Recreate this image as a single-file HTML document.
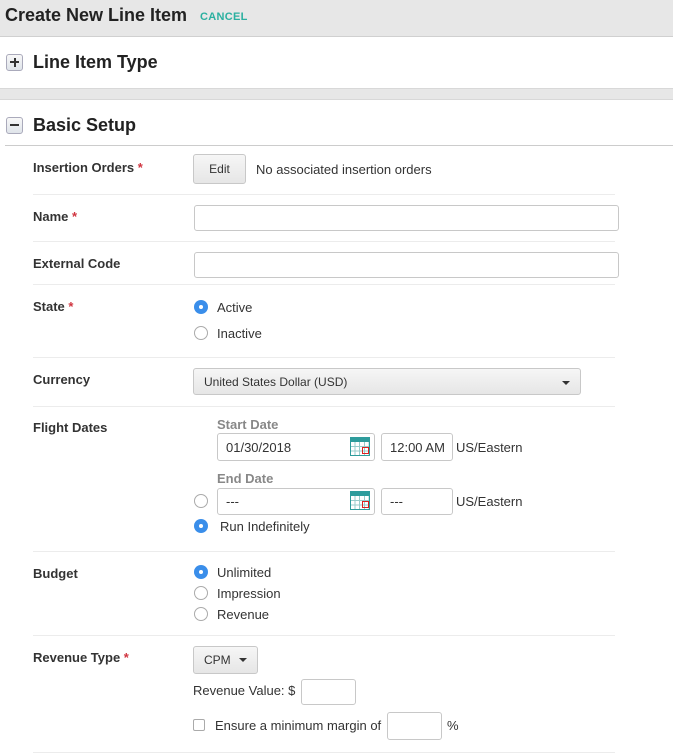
<!DOCTYPE html>
<html><head><style>
*{box-sizing:border-box;margin:0;padding:0}
body{width:673px;height:755px;position:relative;background:#fff;font-family:"Liberation Sans",Arial,sans-serif;color:#333;overflow:hidden;font-size:13px}
.a{position:absolute}
.lbl{position:absolute;left:33px;font-weight:bold;font-size:13px;color:#333}
.req{color:#d0343f}
.sep{position:absolute;left:33px;width:582px;height:1px;background:#ececec}
.inp{position:absolute;border:1px solid #c8c8c8;border-radius:3px;background:#fff;font-size:13px;padding-left:8px;display:flex;align-items:center}
.btn{position:absolute;border:1px solid #c8c8c8;border-radius:3px;background:linear-gradient(#f6f6f6,#e6e6e6);font-size:12px;display:flex;align-items:center}
.r{position:absolute;width:14px;height:14px;border-radius:50%;border:1px solid #aaa;background:#fff}
.r.on{border:none;background:#3a8eea}
.r.on::after{content:"";position:absolute;left:5px;top:5px;width:4px;height:4px;border-radius:50%;background:#fff}
.t{position:absolute;font-size:13px;color:#333}
.car{display:inline-block;width:0;height:0;border-left:4px solid transparent;border-right:4px solid transparent;border-top:4px solid #333}
.cal{position:absolute;width:20px;height:19px;border:1px solid #2e9c9c;background:
linear-gradient(#2e9c9c,#2e9c9c) 0 0/100% 4px no-repeat,
repeating-linear-gradient(90deg,transparent 0 3.6px,#9cc 3.6px 4.6px),
repeating-linear-gradient(0deg,transparent 0 3.6px,#9cc 3.6px 4.6px)}
.cal::after{content:"";position:absolute;left:11px;top:9px;width:5px;height:5px;border:1px solid #d22}
.box{position:absolute;width:17px;height:17px;border:1px solid #aab;border-radius:3px;background:linear-gradient(#f8f8f8,#dfe4ea)}
.box .h{position:absolute;left:3px;top:6px;width:9px;height:2px;background:#333}
.box .v{position:absolute;left:6.5px;top:2.5px;width:2px;height:9px;background:#333}
</style></head><body>
<div class="a" style="left:0;top:0;width:673px;height:37px;background:#e7e7e7;border-bottom:1px solid #d0d0d0"></div>
<div class="a" style="left:5px;top:5px;font-size:18px;font-weight:bold;color:#222">Create New Line Item</div>
<div class="a" style="left:200px;top:11px;font-size:11px;font-weight:bold;color:#2bb0a0;letter-spacing:.3px">CANCEL</div>

<div class="box" style="left:6px;top:54px"><div class="h"></div><div class="v"></div></div>
<div class="a" style="left:33px;top:52px;font-size:18px;font-weight:bold;color:#222">Line Item Type</div>
<div class="a" style="left:0;top:88px;width:673px;height:12px;background:#e7e7e7;border-top:1px solid #d8d8d8;border-bottom:1px solid #d8d8d8"></div>
<div class="box" style="left:6px;top:117px"><div class="h"></div></div>
<div class="a" style="left:33px;top:115px;font-size:18px;font-weight:bold;color:#222">Basic Setup</div>
<div class="a" style="left:5px;top:145px;width:668px;height:1px;background:#ccc"></div>

<div class="lbl" style="top:160px">Insertion Orders <span class="req">*</span></div>
<div class="btn" style="left:193px;top:154px;width:53px;height:30px;justify-content:center">Edit</div>
<div class="t" style="left:256px;top:162px">No associated insertion orders</div>
<div class="sep" style="top:194px"></div>

<div class="lbl" style="top:209px">Name <span class="req">*</span></div>
<div class="inp" style="left:194px;top:205px;width:425px;height:26px"></div>
<div class="sep" style="top:241px"></div>

<div class="lbl" style="top:256px">External Code</div>
<div class="inp" style="left:194px;top:252px;width:425px;height:26px"></div>
<div class="sep" style="top:284px"></div>

<div class="lbl" style="top:299px">State <span class="req">*</span></div>
<div class="r on" style="left:194px;top:300px"></div><div class="t" style="left:217px;top:300px">Active</div>
<div class="r" style="left:194px;top:326px"></div><div class="t" style="left:217px;top:326px">Inactive</div>
<div class="sep" style="top:357px"></div>

<div class="lbl" style="top:372px">Currency</div>
<div class="btn" style="left:193px;top:368px;width:388px;height:27px;padding-left:10px">United States Dollar (USD)<span class="car" style="position:absolute;right:10px;top:12px"></span></div>
<div class="sep" style="top:406px"></div>

<div class="lbl" style="top:420px">Flight Dates</div>
<div class="t" style="left:217px;top:417px;font-weight:bold;color:#888">Start Date</div>
<div class="inp" style="left:217px;top:433px;width:158px;height:28px">01/30/2018</div>
<div class="cal" style="left:350px;top:437px"></div>
<div class="inp" style="left:381px;top:433px;width:72px;height:28px">12:00 AM</div>
<div class="t" style="left:456px;top:440px">US/Eastern</div>
<div class="t" style="left:217px;top:471px;font-weight:bold;color:#888">End Date</div>
<div class="r" style="left:194px;top:494px"></div>
<div class="inp" style="left:217px;top:488px;width:158px;height:27px">---</div>
<div class="cal" style="left:350px;top:491px"></div>
<div class="inp" style="left:381px;top:488px;width:72px;height:27px">---</div>
<div class="t" style="left:456px;top:494px">US/Eastern</div>
<div class="r on" style="left:194px;top:519px"></div><div class="t" style="left:220px;top:519px">Run Indefinitely</div>
<div class="sep" style="top:551px"></div>

<div class="lbl" style="top:566px">Budget</div>
<div class="r on" style="left:194px;top:565px"></div><div class="t" style="left:217px;top:565px">Unlimited</div>
<div class="r" style="left:194px;top:586px"></div><div class="t" style="left:217px;top:586px">Impression</div>
<div class="r" style="left:194px;top:607px"></div><div class="t" style="left:217px;top:607px">Revenue</div>
<div class="sep" style="top:635px"></div>

<div class="lbl" style="top:650px">Revenue Type <span class="req">*</span></div>
<div class="btn" style="left:193px;top:646px;width:65px;height:28px;padding-left:10px">CPM<span class="car" style="margin-left:8px"></span></div>
<div class="t" style="left:193px;top:683px">Revenue Value: $</div>
<div class="inp" style="left:301px;top:679px;width:55px;height:26px"></div>
<div class="a" style="left:193px;top:719px;width:12px;height:12px;border:1px solid #aaa;border-radius:2px"></div>
<div class="t" style="left:215px;top:718px">Ensure a minimum margin of</div>
<div class="inp" style="left:387px;top:712px;width:55px;height:28px"></div>
<div class="t" style="left:447px;top:718px">%</div>
<div class="sep" style="top:752px"></div>
</body></html>
